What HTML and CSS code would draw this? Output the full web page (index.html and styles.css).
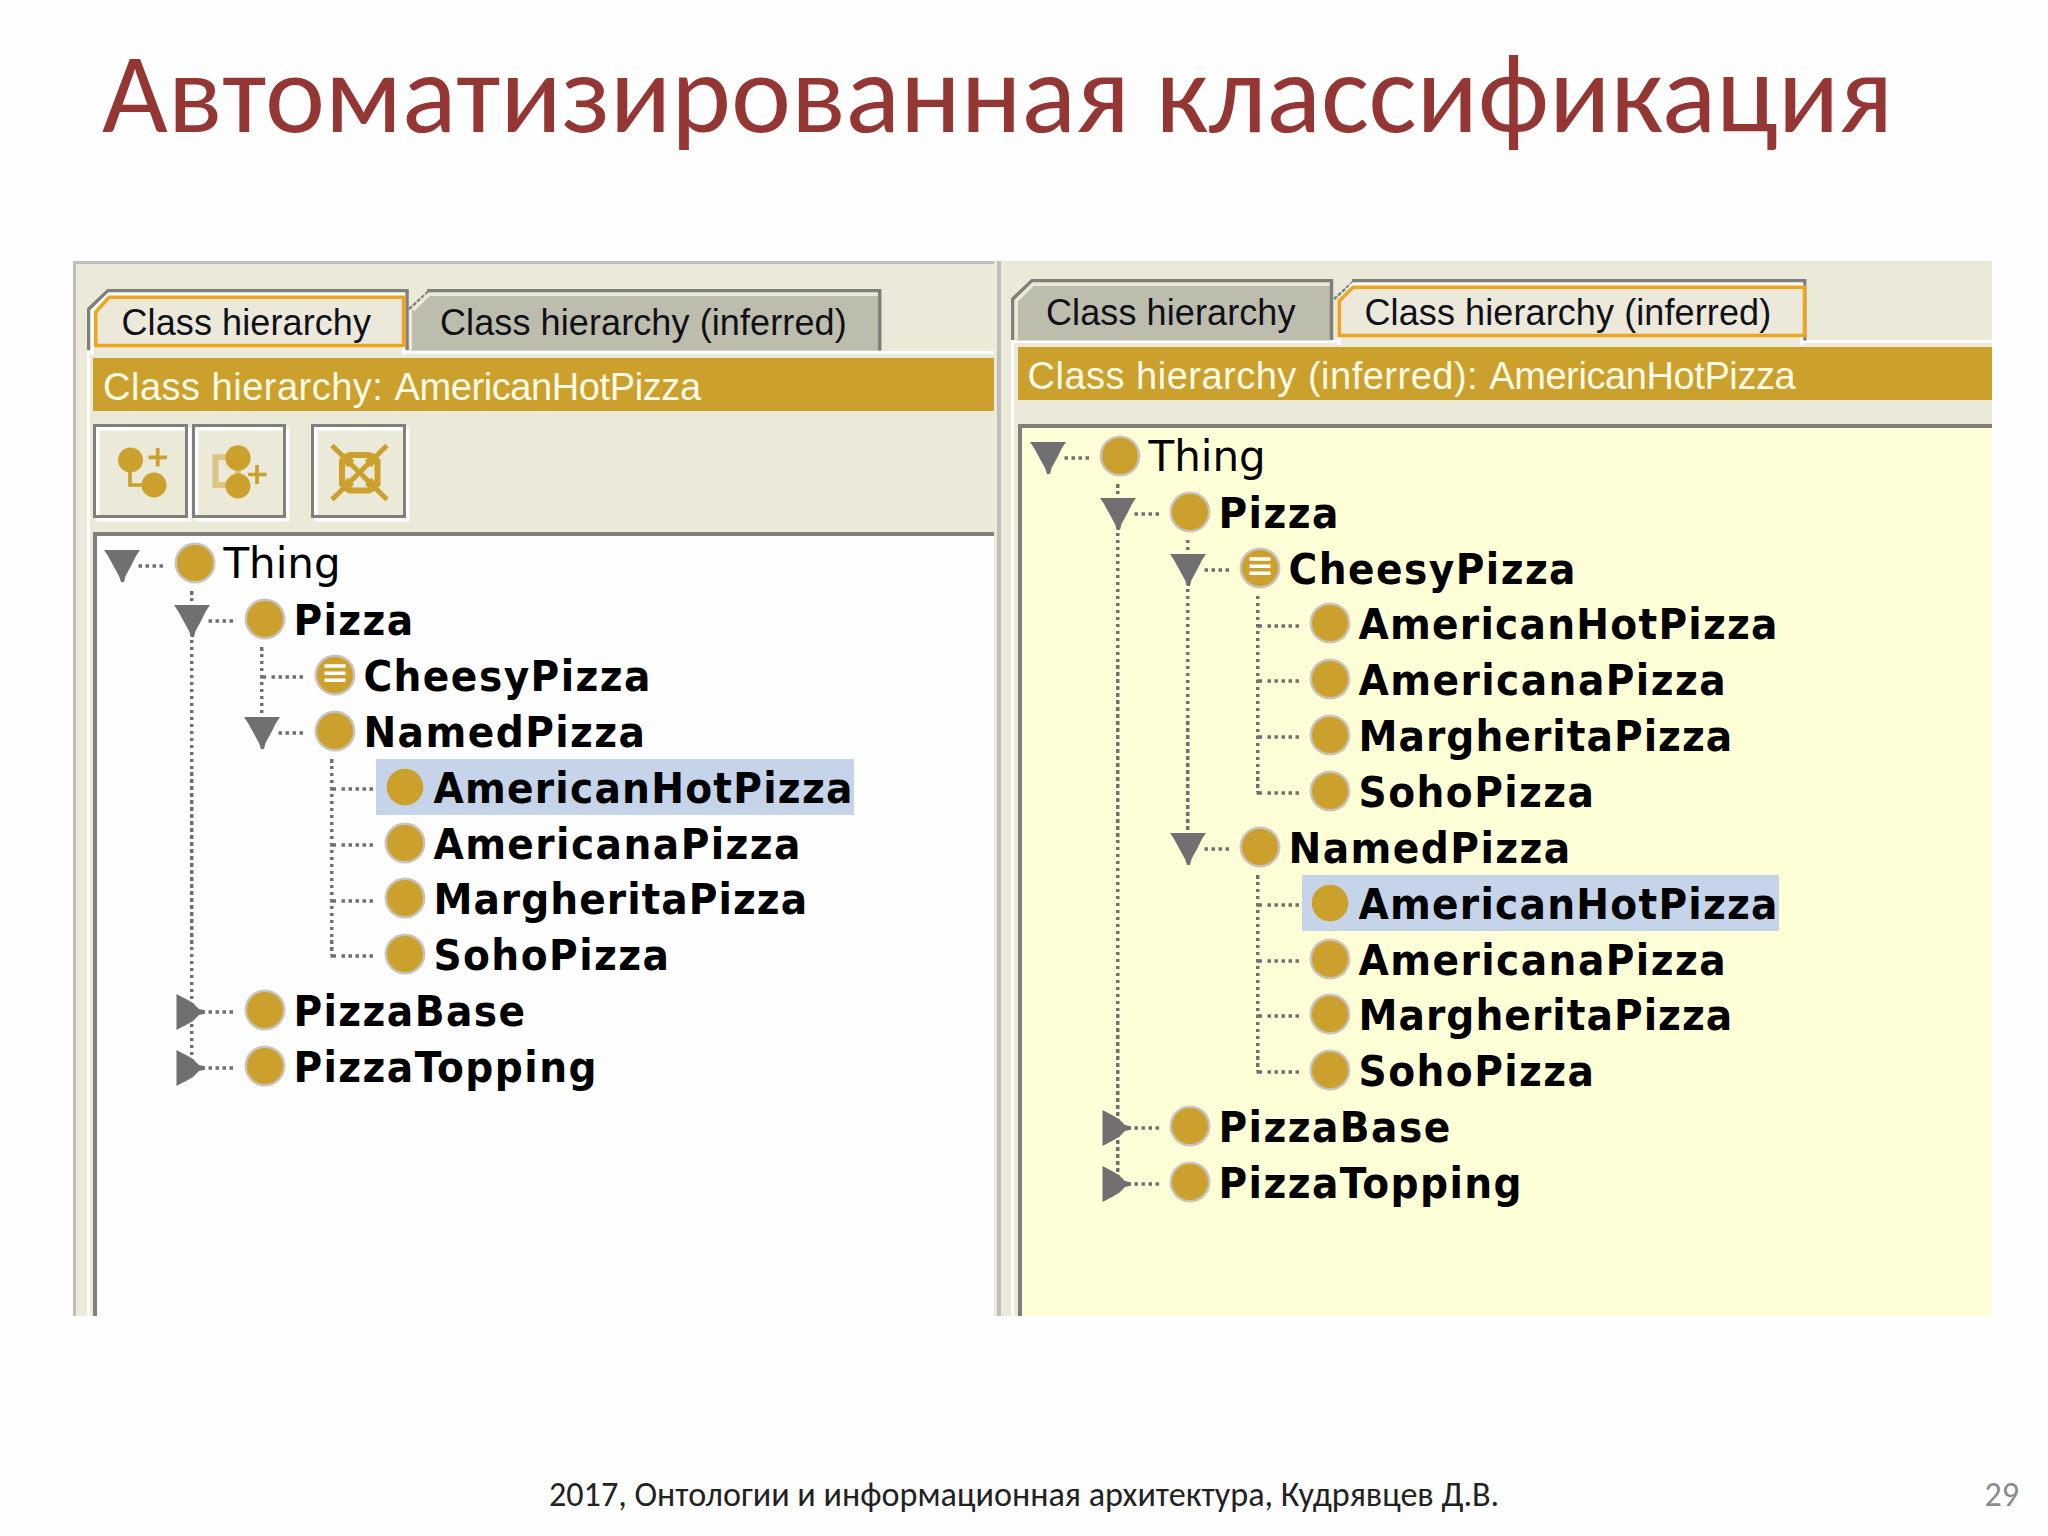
FILE: index.html
```html
<!DOCTYPE html>
<html lang="ru">
<head>
<meta charset="utf-8">
<title>Автоматизированная классификация</title>
<link rel="stylesheet" href="styles.css">
</head>
<body>
<svg class="defs" width="0" height="0" aria-hidden="true">
  <symbol id="open" viewBox="0 0 62 56">
    <path d="M0 14H36L32 20L27 30L21.500 40L20 46H17L15 40L9.500 30L4 20Z" fill="#716f71"/>
    <path d="M34.5 30H60" stroke="#716f71" stroke-width="3.5" stroke-dasharray="3.5 3.5"/>
  </symbol>
  <symbol id="closed" viewBox="0 0 62 56">
    <path d="M2.500 12L12 17L19 21L25 27L31 28.200V31.700L25 33L19 39L12 43L2.500 48Z" fill="#716f71"/>
    <path d="M34.500 30H60" stroke="#716f71" stroke-width="3.5" stroke-dasharray="3.5 3.5"/>
  </symbol>
  <symbol id="leaf" viewBox="0 0 62 56">
    <path d="M16.500 30H22" stroke="#716f71" stroke-width="3.5"/>
    <path d="M27.500 30H60" stroke="#716f71" stroke-width="3.5" stroke-dasharray="3.5 3.5"/>
  </symbol>
  <symbol id="class" viewBox="0 0 42 42">
    <circle cx="21" cy="21" r="20.500" fill="#c8c4bd"/>
    <circle cx="21" cy="21" r="18" fill="#cba02c"/>
  </symbol>
  <symbol id="chosen" viewBox="0 0 42 42">
    <circle cx="21" cy="21" r="18.300" fill="#cba02c"/>
  </symbol>
  <symbol id="defined" viewBox="0 0 42 42">
    <circle cx="21" cy="21" r="20.500" fill="#c8c4bd"/>
    <circle cx="21" cy="21" r="18" fill="#cba02c"/>
    <path d="M10.500 12H31.500M10.500 19.200H31.500M10.500 26.200H31.500" stroke="#fff" stroke-width="3.500"/>
  </symbol>
</svg>

<main class="slide">
  <h1 class="title">Автоматизированная классификация</h1>

  <div class="shot">
    <section class="pane asserted">
      <div class="tabs">
        <div class="tab first active"><svg class="frame" width="323" height="66" viewBox="0 0 323 66"><path d="M1.750 61V20L21 1.750H320V61" class="edge"/><path d="M5.250 66V22L22 5.250H316.500V66" class="light"/><path d="M8.750 56.500V23L22 8.250H316.500V56.500Z" class="focus"/></svg><span>Class hierarchy</span></div>
        <div class="tab second"><svg class="frame" width="474" height="66" viewBox="0 0 474 66"><path d="M3 61.500V21L19 5H470V61.500Z" class="fill"/><path d="M0 20L19 3" class="cut"/><path d="M18 1.750H470.700V61.500" class="edge"/><path d="M4 21L20 5.250H469" class="soft"/></svg><span>Class hierarchy (inferred)</span></div>
      </div>
      <div class="body">
        <div class="heading"><span class="kind">Class hierarchy: </span><span class="name">AmericanHotPizza</span></div>
        <div class="tools">
          <div class="tool"><svg width="80" height="80" viewBox="0 0 80 80"><g fill="#cba02c"><circle cx="30.500" cy="30" r="12.500"/><circle cx="54" cy="55" r="12.500"/></g><path d="M30 30V55H54M48.500 27.300H67M57.700 18V36.500" fill="none" stroke="#cba02c" stroke-width="3.700"/></svg></div>
          <div class="tool"><svg width="80" height="80" viewBox="0 0 80 80"><path d="M40 27H17.500V55H40M40 34V48" fill="none" stroke="#dcc685" stroke-width="6"/><g fill="#cba02c"><circle cx="40" cy="28" r="12.700"/><circle cx="40" cy="56" r="12.500"/></g><path d="M50 44.500H68.500M59 35V54" fill="none" stroke="#cba02c" stroke-width="3.700"/></svg></div>
          <div class="tool apart"><svg width="80" height="80" viewBox="0 0 80 80"><path d="M14 15.500L69 69.500M69 15.500L14 69.500" stroke="#cba02c" stroke-width="5"/><path d="M32 25H51L59.500 31V54L51 60.500H32L24 54V31Z" fill="none" stroke="#cba02c" stroke-width="6"/><path d="M25 26L33 34M58 26L50 34M25 59L33 51M58 59L50 51" stroke="#cba02c" stroke-width="9"/></svg></div>
        </div>
        <div class="view">
          <ul class="tree">
            <li><div class="row"><svg class="knob"><use href="#open"/></svg><div class="label plain"><svg class="dot"><use href="#class"/></svg><span>Thing</span></div></div>
              <ul>
                <li><div class="row"><svg class="knob"><use href="#open"/></svg><div class="label"><svg class="dot"><use href="#class"/></svg><span>Pizza</span></div></div>
                  <ul class="open-last">
                    <li><div class="row"><svg class="knob"><use href="#leaf"/></svg><div class="label"><svg class="dot"><use href="#defined"/></svg><span>CheesyPizza</span></div></div></li>
                    <li><div class="row"><svg class="knob"><use href="#open"/></svg><div class="label"><svg class="dot"><use href="#class"/></svg><span>NamedPizza</span></div></div>
                      <ul>
                        <li><div class="row"><svg class="knob"><use href="#leaf"/></svg><div class="label selected"><svg class="dot"><use href="#chosen"/></svg><span>AmericanHotPizza</span></div></div></li>
                        <li><div class="row"><svg class="knob"><use href="#leaf"/></svg><div class="label"><svg class="dot"><use href="#class"/></svg><span>AmericanaPizza</span></div></div></li>
                        <li><div class="row"><svg class="knob"><use href="#leaf"/></svg><div class="label tight"><svg class="dot"><use href="#class"/></svg><span>MargheritaPizza</span></div></div></li>
                        <li><div class="row"><svg class="knob"><use href="#leaf"/></svg><div class="label"><svg class="dot"><use href="#class"/></svg><span>SohoPizza</span></div></div></li>
                      </ul>
                    </li>
                  </ul>
                </li>
                <li><div class="row"><svg class="knob"><use href="#closed"/></svg><div class="label"><svg class="dot"><use href="#class"/></svg><span>PizzaBase</span></div></div></li>
                <li><div class="row"><svg class="knob"><use href="#closed"/></svg><div class="label"><svg class="dot"><use href="#class"/></svg><span>PizzaTopping</span></div></div></li>
              </ul>
            </li>
          </ul>
        </div>
      </div>
    </section>

    <section class="pane inferred">
      <div class="tabs">
        <div class="tab first"><svg class="frame" width="323" height="66" viewBox="0 0 323 66"><path d="M5 61.500V22L22 6H319V61.500Z" class="fill"/><path d="M1.750 61V20L21 1.750H320.500V61" class="edge"/><path d="M5.250 61V22L22 5.250H318.500" class="soft"/></svg><span>Class hierarchy</span></div>
        <div class="tab second active"><svg class="frame" width="474" height="66" viewBox="0 0 474 66"><path d="M0 20L19 3" class="cut"/><path d="M18 1.750H470.700V61.500" class="edge"/><path d="M5.250 66V22L19 5.250H467.500V66" class="light"/><path d="M5.250 56.500V22L19 8.250H470.500V56.500Z" class="focus"/></svg><span>Class hierarchy (inferred)</span></div>
      </div>
      <div class="body">
        <div class="heading"><span class="kind">Class hierarchy (inferred): </span><span class="name">AmericanHotPizza</span></div>
        <div class="view">
          <ul class="tree">
            <li><div class="row"><svg class="knob"><use href="#open"/></svg><div class="label plain"><svg class="dot"><use href="#class"/></svg><span>Thing</span></div></div>
              <ul>
                <li><div class="row"><svg class="knob"><use href="#open"/></svg><div class="label"><svg class="dot"><use href="#class"/></svg><span>Pizza</span></div></div>
                  <ul class="open-last">
                    <li><div class="row"><svg class="knob"><use href="#open"/></svg><div class="label"><svg class="dot"><use href="#defined"/></svg><span>CheesyPizza</span></div></div>
                      <ul>
                        <li><div class="row"><svg class="knob"><use href="#leaf"/></svg><div class="label long"><svg class="dot"><use href="#class"/></svg><span>AmericanHotPizza</span></div></div></li>
                        <li><div class="row"><svg class="knob"><use href="#leaf"/></svg><div class="label"><svg class="dot"><use href="#class"/></svg><span>AmericanaPizza</span></div></div></li>
                        <li><div class="row"><svg class="knob"><use href="#leaf"/></svg><div class="label tight"><svg class="dot"><use href="#class"/></svg><span>MargheritaPizza</span></div></div></li>
                        <li><div class="row"><svg class="knob"><use href="#leaf"/></svg><div class="label"><svg class="dot"><use href="#class"/></svg><span>SohoPizza</span></div></div></li>
                      </ul>
                    </li>
                    <li><div class="row"><svg class="knob"><use href="#open"/></svg><div class="label"><svg class="dot"><use href="#class"/></svg><span>NamedPizza</span></div></div>
                      <ul>
                        <li><div class="row"><svg class="knob"><use href="#leaf"/></svg><div class="label selected"><svg class="dot"><use href="#chosen"/></svg><span>AmericanHotPizza</span></div></div></li>
                        <li><div class="row"><svg class="knob"><use href="#leaf"/></svg><div class="label"><svg class="dot"><use href="#class"/></svg><span>AmericanaPizza</span></div></div></li>
                        <li><div class="row"><svg class="knob"><use href="#leaf"/></svg><div class="label tight"><svg class="dot"><use href="#class"/></svg><span>MargheritaPizza</span></div></div></li>
                        <li><div class="row"><svg class="knob"><use href="#leaf"/></svg><div class="label"><svg class="dot"><use href="#class"/></svg><span>SohoPizza</span></div></div></li>
                      </ul>
                    </li>
                  </ul>
                </li>
                <li><div class="row"><svg class="knob"><use href="#closed"/></svg><div class="label"><svg class="dot"><use href="#class"/></svg><span>PizzaBase</span></div></div></li>
                <li><div class="row"><svg class="knob"><use href="#closed"/></svg><div class="label"><svg class="dot"><use href="#class"/></svg><span>PizzaTopping</span></div></div></li>
              </ul>
            </li>
          </ul>
        </div>
      </div>
    </section>
  </div>

  <footer class="footer"><span></span><span>2017, Онтологии и информационная архитектура, Кудрявцев Д.В.</span><span class="page">29</span></footer>
</main>
</body>
</html>
```
FILE: styles.css
```css
* { box-sizing: border-box; }
body { margin: 0; background: #fefefe; }
.defs { position: absolute; }

.slide {
  width: 2048px;
  height: 1536px;
  display: grid;
  grid-template-rows: 261px 1055px 1fr;
  overflow: hidden;
  font-family: Carlito, Calibri, sans-serif;
}
.title {
  margin: 0;
  padding: 24px 0 0 102px;
  font-size: 113.75px;
  font-weight: 400;
  line-height: 140px;
  color: #943634;
  white-space: nowrap;
}

/* Two editor panes side by side */
.shot {
  margin-left: 73px;
  width: 1919px;
  display: grid;
  grid-template-columns: 921px 991px;
  gap: 7px;
  background: linear-gradient(90deg, #ebe9d8 924px, #bebebe 924px, #bebebe 928px, #ebe9d8 928px);
  font-family: "Liberation Sans", Arial, sans-serif;
}
.pane { display: flex; flex-direction: column; background: #ebe9d8; min-width: 0; }
.asserted { border: solid #bebebe; border-width: 3px 0 0 3px; padding: 25px 0 0 10.5px; }
.inferred { padding: 17.5px 0 0 10px; }

.tabs { display: flex; height: 61.5px; flex: none; position: relative; }
.tab {
  position: relative;
  display: flex;
  height: 61.5px;
  font-size: 36px;
  line-height: 61.5px;
  letter-spacing: 0.1px;
  white-space: nowrap;
  color: #101018;
}
.tab.active { z-index: 1; }
.first { width: 322.5px; padding-left: 35px; }
.second { width: 474px; padding-left: 31px; }
.tab span { position: relative; top: 3px; }
.frame { position: absolute; left: 0; top: 0; fill: none; }
.edge { stroke: #807f79; stroke-width: 3.5; }
.cut { stroke: #807f79; stroke-width: 2.5; stroke-dasharray: 4 1.5; }
.light { stroke: #fff; stroke-width: 3.5; fill: #ebe9d8; }
.soft { stroke: #ebe9d8; stroke-width: 3.5; }
.focus { stroke: #f0a41e; stroke-width: 3.5; fill: #ece9da; }
.fill { fill: #bdbdad; }

.body {
  flex: 1;
  display: flex;
  flex-direction: column;
  border: solid #fff;
  border-width: 3.5px 0 0 3.5px;
  padding: 4px 0 0 3.5px;
}
.heading {
  height: 53px;
  padding-left: 10px;
  background: #cba02c;
  color: #fffbe6;
  font-size: 38px;
  line-height: 58px;
  white-space: pre;
}
.kind { letter-spacing: 0.5px; }
.name { letter-spacing: -0.4px; }
.tools { display: flex; height: 121px; padding-top: 13px; gap: 4px; }
.tool {
  width: 94.5px;
  height: 94.5px;
  border: 3.5px solid #807f79;
  box-shadow: inset 3.5px 3.5px #fff, 3.5px 3.5px #fff;
  padding: 3.5px;
}
.tool svg { display: block; }
.apart { margin-left: 21px; }

.view { flex: 1; border: solid #807f79; border-width: 4px 0 0 4px; }
.asserted .view { background: #fefefe; }
.inferred .view { background: #ffffd7; margin-top: 24px; }

/* Class tree */
ul { list-style: none; margin: 0; padding: 0; }
.tree { padding-left: 8px; }
.asserted .tree { padding-left: 7.4px; }
.tree ul {
  padding-left: 70px;
  background: repeating-linear-gradient(#716f71 0 3.5px, transparent 3.5px 6.98px) 86px 0 / 3.5px calc(100% - 27px) no-repeat;
}
.tree ul.open-last { background-size: 3.5px var(--run); }
.asserted .open-last { --run: 68px; }
.inferred .open-last { --run: 290px; }
.row { display: flex; height: 55.85px; }
.knob { width: 62px; height: 56px; overflow: visible; flex: none; }
.label {
  display: flex;
  align-items: center;
  height: 55.85px;
  padding: 0 0 0 7.5px;
  font: 700 43.5px/56px "DejaVu Sans Condensed", Tahoma, Verdana, sans-serif;
  letter-spacing: 1.45px;
  color: #000;
  white-space: nowrap;
}
.label span { padding-top: 2px; }
.plain { font: 400 42px/56px "DejaVu Sans", Verdana, sans-serif; letter-spacing: 0; }
.long, .selected { letter-spacing: 1.25px; }
.tight { letter-spacing: 1.05px; }
.dot { width: 42px; height: 42px; margin-right: 7.5px; flex: none; }
.selected { background: #c5d4e9; }

.footer {
  display: grid;
  grid-template-columns: 549px 1fr auto;
  align-items: end;
  padding: 0 29px 20px 0;
  font-size: 34.15px;
  line-height: 44px;
  color: #222;
  white-space: nowrap;
}
.page { color: #8b8b8b; }
```
